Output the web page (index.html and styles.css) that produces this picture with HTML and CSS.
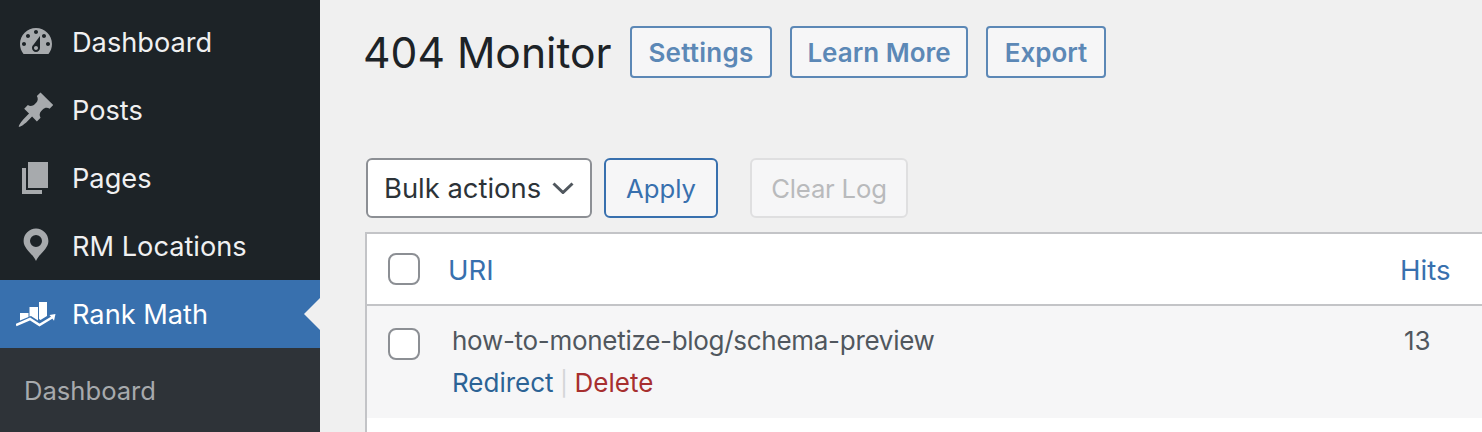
FILE: index.html
```html
<html>
  <head>
    <title>404 Monitor</title>
    <link rel="stylesheet" href="styles.css">
  </head>
  <body>
  <div class="page">
    <div class="sidebar">
      <div class="menu-item">
        <svg class="menu-icon" viewBox="0 0 20 20"><path fill-rule="evenodd" d="M3.76 16h12.48c1.1-1.37 1.76-3.11 1.76-5 0-4.42-3.58-8-8-8s-8 3.58-8 8c0 1.89.66 3.63 1.76 5zM10 4c.55 0 1 .45 1 1s-.45 1-1 1-1-.45-1-1 .45-1 1-1zM6 6c.55 0 1 .45 1 1s-.45 1-1 1-1-.45-1-1 .45-1 1-1zm8 0c.55 0 1 .45 1 1s-.45 1-1 1-1-.45-1-1 .45-1 1-1zm-5.37 5.55L12 7v6c0 1.1-.9 2-2 2s-2-.9-2-2c0-.57.24-1.08.63-1.45zM4 10c.55 0 1 .45 1 1s-.45 1-1 1-1-.45-1-1 .45-1 1-1zm12 0c.55 0 1 .45 1 1s-.45 1-1 1-1-.45-1-1 .45-1 1-1zm-5 3c0-.55-.45-1-1-1s-1 .45-1 1 .45 1 1 1 1-.45 1-1z"/></svg>
        <span>Dashboard</span>
      </div>
      <div class="menu-item">
        <svg class="menu-icon" viewBox="0 0 20 20"><path d="M10.44 3.02l1.82-1.82 6.36 6.35-1.83 1.82c-1.05-.68-2.48-.57-3.41.36l-.75.75c-.92.93-1.04 2.35-.35 3.41l-1.83 1.82-2.41-2.41-2.8 2.79c-.42.42-3.38 2.71-3.8 2.29s1.86-3.39 2.28-3.81l2.79-2.79L4.1 9.36l1.83-1.82c1.05.69 2.48.57 3.41-.36l.75-.75c.93-.92 1.04-2.35.35-3.41z"/></svg>
        <span>Posts</span>
      </div>
      <div class="menu-item">
        <svg class="menu-icon" viewBox="0 0 20 20"><path d="M6 15V2h10v13H6zm-1 1h8v2H3V5h2v11z"/></svg>
        <span>Pages</span>
      </div>
      <div class="menu-item">
        <svg class="menu-icon" viewBox="0 0 20 20"><path fill-rule="evenodd" d="M10 1.3c-3.4 0-6.2 2.8-6.2 6.2 0 4 4.4 6 6.2 10 1.8-4 6.2-6 6.2-10 0-3.4-2.8-6.2-6.2-6.2zm0 3.2a3 3 0 1 1 0 6 3 3 0 0 1 0-6z"/></svg>
        <span>RM Locations</span>
      </div>
      <div class="menu-item current">
        <svg class="menu-icon" viewBox="0 0 40 40">
          <path d="M4 19h8.500v4L4 26.500z"/>
          <path d="M13.500 13H22v13.500L15 22l-1.500.6z"/>
          <path d="M23 8h8v14l-6.500 4-1.500-1z"/>
          <path d="M0 31l14-6 9.500 6L36 23.500" fill="none" stroke="#fff" stroke-width="2.500"/>
          <path d="M33.500 21l6-1-1.500 6.700z"/>
        </svg>
        <span>Rank Math</span>
      </div>
      <div class="submenu">
        <div class="submenu-item">Dashboard</div>
      </div>
    </div>
    <div class="main">
      <div class="title-row">
        <h1>404 Monitor</h1>
        <a class="title-btn settings">Settings</a>
        <a class="title-btn learn">Learn More</a>
        <a class="title-btn export">Export</a>
      </div>
      <div class="actions-row">
        <div class="select">Bulk actions
          <svg class="chevron" viewBox="0 0 22 12"><path d="M1.500 1.500L11 10.500l9.500-9" fill="none" stroke="#50575e" stroke-width="3"/></svg>
        </div>
        <button class="btn apply">Apply</button>
        <button class="btn disabled">Clear Log</button>
      </div>
      <div class="table">
        <div class="row head">
          <span class="check"></span>
          <a class="uri-head">URI</a>
          <a class="hits-head">Hits</a>
        </div>
        <div class="row entry">
          <span class="check"></span>
          <div class="uri-cell">
            <div class="uri">how-to-monetize-blog/schema-preview</div>
            <div class="links"><a class="redirect">Redirect</a><span class="sep">|</span><a class="delete">Delete</a></div>
          </div>
          <div class="hits">13</div>
        </div>
      </div>
    </div>
  </div>
  </body>
</html>
```

FILE: styles.css
```css
html, body {
  margin: 0;
  height: 100%;
  overflow: hidden;
}
body {
  background: #f0f0f0;
  font-family: "Inter", "Liberation Sans", sans-serif;
  font-size: 26px;
  color: #50575e;
}
.page {
  display: flex;
  height: 432px;
}

/* sidebar */
.sidebar {
  width: 320px;
  flex: none;
  background: #1d2327;
  padding-top: 8px;
  box-sizing: border-box;
}
.menu-item {
  height: 68px;
  display: flex;
  align-items: center;
  padding-left: 16px;
  color: #f0f0f1;
  font-size: 27.200px;
  position: relative;
}
.menu-icon {
  width: 40px;
  height: 40px;
  fill: #a7aaad;
  margin-right: 16px;
  flex: none;
}
.current {
  background: #3870ae;
  color: #fff;
}
.current .menu-icon {
  fill: #fff;
}
.current::after {
  content: "";
  position: absolute;
  right: 0;
  top: 50%;
  margin-top: -16px;
  border: 16px solid transparent;
  border-left: 0;
  border-right-color: #f0f0f0;
}
.submenu {
  background: #2e3338;
  height: 84px;
}
.submenu-item {
  padding: 26px 0 0 24px;
  color: #a7aaad;
  font-size: 25.600px;
  line-height: 34px;
}

/* main */
.main {
  flex: 1;
  padding-left: 45px;
  min-width: 0;
}
.title-row {
  display: flex;
  align-items: center;
  height: 52px;
  margin-top: 26px;
}
h1 {
  width: 249px;
  margin: 0 18px 0 -2px;
  font-size: 42.600px;
  font-weight: 400;
  white-space: nowrap;
  color: #1d2327;
}
.title-btn {
  height: 52px;
  box-sizing: border-box;
  display: flex;
  align-items: center;
  justify-content: center;
  margin-right: 18px;
  border: 2px solid #5c88b6;
  border-radius: 4px;
  background: #f6f6f7;
  color: #5c88b6;
  font-weight: 600;
}
.settings {
  width: 142px;
  letter-spacing: .25px;
}
.learn {
  width: 178px;
}
.export {
  width: 120px;
}
.actions-row {
  display: flex;
  align-items: center;
  margin-top: 80px;
  padding-left: 1px;
}
.select {
  width: 226px;
  height: 60px;
  box-sizing: border-box;
  display: flex;
  align-items: center;
  justify-content: space-between;
  padding: 0 16px 0 16px;
  background: #fff;
  border: 2px solid #8c8f94;
  border-radius: 6px;
  color: #2c3338;
  font-size: 27.400px;
}
.chevron {
  width: 22px;
  height: 12px;
}
.btn {
  height: 60px;
  margin-left: 12px;
  padding: 0;
  font: inherit;
  font-size: 25.700px;
  background: #f6f6f7;
  border: 2px solid #3870ae;
  border-radius: 6px;
  color: #3870ae;
}
.apply {
  width: 114px;
}
.btn.disabled {
  width: 158px;
  margin-left: 32px;
  border-color: #dfdfe0;
  color: #b9babc;
  letter-spacing: -.2px;
}
.table {
  margin-top: 14px;
  margin-right: -2px;
  background: #fff;
  border: 2px solid #c3c4c7;
  border-bottom: 0;
  height: 198px;
}
.row {
  display: flex;
  position: relative;
}
.head {
  height: 70px;
  align-items: center;
  border-bottom: 2px solid #c3c4c7;
  color: #3870ae;
  font-size: 27.600px;
}
.entry {
  height: 112px;
  background: #f6f6f7;
}
.check {
  width: 32px;
  height: 32px;
  box-sizing: border-box;
  flex: none;
  margin-left: 21px;
  background: #fff;
  border: 2px solid #8c8f94;
  border-radius: 8px;
}
.entry .check {
  margin-top: 22px;
}
.uri-head {
  margin-left: 28px;
  flex: 1;
  padding-top: 2px;
}
.hits-head {
  width: 82px;
  padding-top: 2px;
}
.uri-cell {
  margin-left: 32px;
  flex: 1;
  padding-top: 18px;
}
.uri {
  line-height: 34px;
  letter-spacing: -.29px;
}
.links {
  line-height: 34px;
  margin-top: 8px;
}
.redirect {
  color: #2c6395;
}
.sep {
  color: #d4d5d7;
  margin: 0 6.500px;
  font-size: 24px;
}
.delete {
  color: #a72f2f;
}
.hits {
  width: 78px;
  padding-top: 18px;
  line-height: 34px;
}
```
